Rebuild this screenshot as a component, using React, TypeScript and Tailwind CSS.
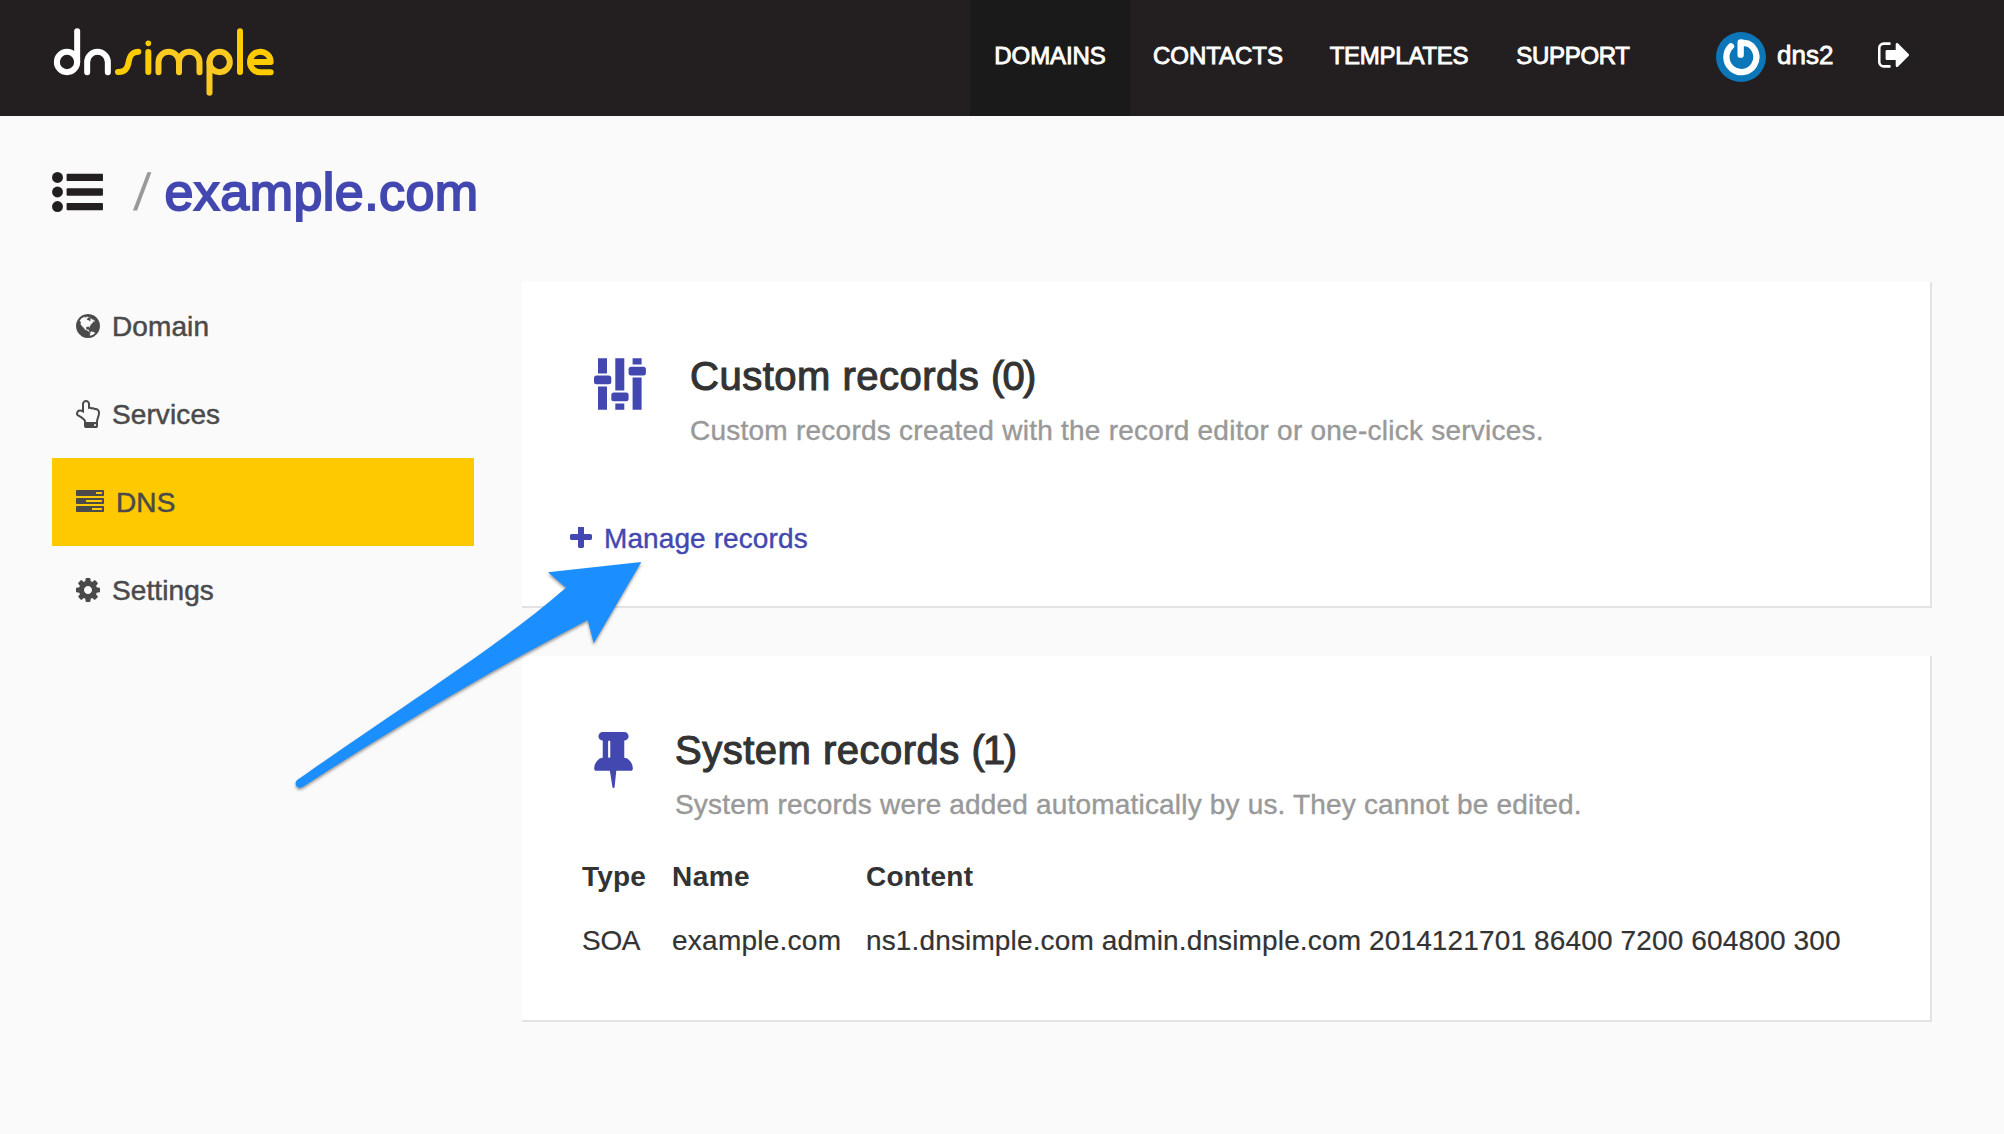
import React from "react";

const GLOBE =
  "M896 128q209 0 385.5 103t279.5 279.5 103 385.5-103 385.5-279.5 279.5-385.5 103-385.5-103-279.5-279.5-103-385.5 103-385.5 279.5-279.5 385.5-103zm274 521q-2 1-9.5 9.5t-13.5 9.5q2 0 4.5-5t5-11 3.5-7q6-7 22-15 14-6 52-12 34-8 51 11-2-2 9.5-13t14.5-12q3-2 15-4.5t15-7.5l2-22q-12 1-17.5-7t-6.5-21q0 2-6 8 0-7-4.5-8t-11.5 1-9 1q-10-3-15-7.5t-8-16.5-4-15q-2-5-9.5-11t-9.5-10q-1-2-2.5-5.5t-3-6.5-4-5.5-5.5-2.5-7 5-7.5 10-4.5 5q-3-2-6-1.5t-4.5 1-4.5 3-5 3.5q-3 2-8.5 3t-8.5 2q15-5-1-11-10-4-16-3 9-4 7.5-12t-8.5-14h5q-1-4-8.5-8.5t-17.5-8.5-13-6q-8-5-34-9.5t-33-.5q-5 6-4.5 10.5t4 14 3.5 12.5q1 6-5.5 13t-6.5 12q0 7 14 15.5t10 21.5q-3 8-16 16t-16 12q-5 8-1.5 18.5t10.5 16.5q2 2 1.5 4t-3.5 4.5-5.5 4-6.5 3.5l-3 2q-11 5-20.5-6t-13.5-26q-7-25-16-30-23-8-29 1-5-13-41-26-25-9-58-4 6-1 0-15-7-15-19-12 3-6 4-17.5t1-13.5q3-13 12-23 1-1 7-8.5t9.5-13.5.5-6q35 4 50-11 5-5 11.5-17t10.5-17q9-6 14-5.5t14.5 5.5 14.5 5q14 1 15.5-11t-7.5-20q12 1 3-17-4-7-8-9-12-4-27 5-8 4 2 8-1-1-9.5 10.5t-16.5 17.5-16-5q-1-1-5.5-13.5t-9.5-13.5q-8 0-16 15 3-8-11-15t-24-8q19-12-8-27-7-4-20.5-5t-19.5 4q-5 7-5.5 11.5t5 8 10.5 5.5 11.5 4 8.5 3q14 10 8 14-2 1-8.5 3.5t-11.5 4.5-6 4q-3 4 0 14t-2 14q-5-5-9-17.5t-7-16.5q7 9-25 6l-10-1q-4 0-16 2t-20.5 1-13.5-8q-4-8 0-20 1-4 4-2-4-3-11-9.5t-10-8.5q-46 15-94 41 6 1 12-1 5-2 13-6.5t10-5.5q34-14 42-7l5-5q14 16 20 25-7-4-30-1-20 6-22 12 7 12 5 18-4-3-11.5-10t-14.5-11-15-5q-16 0-22 1-146 80-235 222 7 7 12 8 4 1 5 9t2.5 11 11.5-3q9 8 3 19 1-1 44 27 19 17 21 21 3 11-10 18-1-2-9-9t-9-4q-3 5 .5 18.5t10.5 12.5q-7 0-9.5 16t-2.5 35.5-1 23.5l2 1q-3 12 5.5 34.5t21.5 19.5q-13 3 20 43 6 8 8 9 3 2 12 7.5t15 10 10 10.5q4 5 10 22.5t14 23.5q-2 6 9.5 20t10.5 23q-1 0-2.5 1t-2.5 1q3 7 15.5 14t15.5 13q1 3 2 10t3 11 8 2q2-20-24-62-15-25-17-29-3-5-5.5-15.5t-4.5-14.5q2 0 6 1.5t8.5 3.5 7.5 4 2 3q-3 7 2 17.5t12 18.5 17 19 12 13q6 6 14 19.5t0 13.5q9 0 20 10.5t17 19.5q5 8 8 26t5 24q2 7 8.5 13.5t12.5 9.5l16 8 13 7q5 2 18.5 10.5t21.5 11.5q10 4 16 4t14.5-2.5 13.5-3.5q15-2 29 15t21 21q36 19 55 11-2 1 .5 7.5t8 15.5 9 14.5 5.5 8.5q5 6 18 15t18 15q6-4 7-9-3 8 7 20t18 10q14-3 14-32-31 15-49-18 0-1-2.5-5.5t-4-8.5-2.5-8.5 0-7.5 5-3q9 0 10-3.5t-2-12.5-4-13q-1-8-11-20t-12-15q-5 9-16 8t-16-9q0 1-1.5 5.5t-1.5 6.5q-13 0-15-1 1-3 2.5-17.5t3.5-22.5q1-4 5.5-12t7.5-14.5 4-12.5-4.5-9.5-17.5-2.5q-19 1-26 20-1 3-3 10.5t-5 11.5-9 7q-7 3-24 2t-24-5q-13-8-22.5-29t-9.5-37q0-10 2.5-26.5t3-25-5.5-24.5q3-2 9-9.5t10-10.5q2-1 4.5-1.5t4.5 0 4-1.5 3-6q-1-1-4-3-3-3-4-3 7 3 28.5-1.5t27.5 1.5q15 11 22-2 0-1-2.5-9.5t-.5-13.5q5 27 29 9 3 3 15.5 5t17.5 5q3 2 7 5.5t5.5 4.5 5-.5 8.5-6.5q10 14 12 24 11 40 19 44 7 3 11 2t4.5-9.5 0-14-1.5-12.5l-1-8v-18l-1-8q-15-3-18.5-12t1.5-18.5 15-18.5q1-1 8-3.5t15.5-6.5 12.5-8q21-19 15-35 7 0 11-9-1 0-5-3t-7.5-5-4.5-2q9-5 2-16 5-3 7.5-11t7.5-10q9 12 21 2 8-8 1-16 5-7 20.5-10.5t18.5-9.5q7 2 8-2t1-12 3-12q4-5 15-9t13-5l17-11q3-4 0-4 18 2 31-11 10-11-6-20 3-6-3-9.5t-15-5.5q3-1 11.5-.5t10.5-1.5q15-10-7-16-17-5-43 12zm-163 877q206-36 351-189-3-3-12.5-4.5t-12.5-3.5q-18-7-24-8 1-7-2.5-13t-8-9-12.5-8-11-7q-2-2-7-6t-7-5.5-7.5-4.5-8.5-2-10 1l-3 1q-3 1-5.5 2.5t-5.5 3-4 3 0 2.5q-21-17-36-22-5-1-11-5.5t-10.5-7-10-1.5-11.5 7q-5 5-6 15t-2 13q-7-5 0-17.5t2-18.5q-3-6-10.5-4.5t-12 4.5-11.5 8.5-9 6.5-8.5 5.5-8.5 7.5q-3 4-6 12t-5 11q-2-4-11.5-6.5t-9.5-5.5q2 10 4 35t5 38q7 31-12 48-27 25-29 40-4 22 12 26 0 7-8 20.5t-7 21.5q0 6 2 16z";
const HAND =
  "M1408 1600q0-26-19-45t-45-19-45 19-19 45 19 45 45 19 45-19 19-45zm128-764q0-189-167-189-26 0-56 5-16-30-52.5-47.5t-73.5-17.5-69 18q-50-53-119-53-25 0-55.5 10t-47.5 25v-331q0-52-38-90t-90-38q-51 0-89.5 39t-38.5 89v576q-20 0-48.5-15t-55-33-68-33-84.5-15q-67 0-97.5 44.5t-30.5 115.5q0 24 139 90 44 24 65 37 64 40 145 112 81 71 106 101 57 69 57 140v32h640v-32q0-72 32-167t64-193.5 32-179.5zm128-5q0 133-69 322-59 164-59 223v288q0 53-37.5 90.5t-90.5 37.5h-640q-53 0-90.5-37.5t-37.5-90.5v-288q0-10-4.5-21.5t-14-23.5-18-22.5-22.5-24-21.5-20.5-21.5-19-17-14q-74-65-129-100-21-13-62-33t-72-37-63-40.5-49.5-55-17.5-69.5q0-125 67-206.5t189-81.5q68 0 128 22v-374q0-104 77-180t179-76q105 0 181 75.5t76 180.5v169q62 4 119 37 21-3 43-3 101 0 178 60 139-1 219.5 85t80.5 227z";
const TASKS =
  "M1024 1408h640v-128h-640v128zm-384-512h1024v-128h-1024v128zm640-512h384v-128h-384v128zm512 832v256q0 26-19 45t-45 19h-1664q-26 0-45-19t-19-45v-256q0-26 19-45t45-19h1664q26 0 45 19t19 45zm0-512v256q0 26-19 45t-45 19h-1664q-26 0-45-19t-19-45v-256q0-26 19-45t45-19h1664q26 0 45 19t19 45zm0-512v256q0 26-19 45t-45 19h-1664q-26 0-45-19t-19-45v-256q0-26 19-45t45-19h1664q26 0 45 19t19 45z";
const COG =
  "M1152 896q0-106-75-181t-181-75-181 75-75 181 75 181 181 75 181-75 75-181zm512-109v222q0 12-8 23t-20 13l-185 28q-19 54-39 91 35 50 107 138 10 12 10 25t-9 23q-27 37-99 108t-94 71q-12 0-26-9l-138-108q-44 23-91 38-16 136-29 186-7 28-36 28h-222q-14 0-24.5-8.5t-11.5-21.5l-28-184q-49-16-90-37l-141 107q-10 9-25 9-14 0-25-11-126-114-165-168-7-10-7-23 0-12 8-23 15-21 51-66.5t54-70.5q-27-50-41-99l-183-27q-13-2-21-12.5t-8-23.5v-222q0-12 8-23t19-13l186-28q14-46 39-92-40-57-107-138-10-12-10-24 0-10 9-23 26-36 98.5-107.5t94.5-71.5q13 0 26 10l138 107q44-23 91-38 16-136 29-186 7-28 36-28h222q14 0 24.5 8.5t11.5 21.5l28 184q49 16 90 37l142-107q9-9 24-9 13 0 25 10 129 119 165 170 7 8 7 22 0 12-8 23-15 21-51 66.5t-54 70.5q26 50 41 98l183 28q13 2 21 12.5t8 23.5z";
const SIGN_OUT =
  "M704 1440q0 4 1 20t.5 26.5-3 23.5-10 19.5-20.5 6.5h-320q-119 0-203.5-84.5t-84.5-203.5v-704q0-119 84.5-203.5t203.5-84.5h320q13 0 22.5 9.5t9.5 22.5q0 4 1 20t.5 26.5-3 23.5-10 19.5-20.5 6.5h-320q-66 0-113 47t-47 113v704q0 66 47 113t113 47h312l11.5 1 11.5 3 8 5.5 7 9 2 13.5zm928-544q0 26-19 45l-544 544q-19 19-45 19t-45-19-19-45v-288h-448q-26 0-45-19t-19-45v-384q0-26 19-45t45-19h448v-288q0-26 19-45t45-19 45 19l544 544q19 19 19 45z";
const PIN =
  "M800 864v-448q0-14-9-23t-23-9-23 9-9 23v448q0 14 9 23t23 9 23-9 9-23zm672 352q0 26-19 45t-45 19h-429l-51 483q-2 12-10.5 20.5t-20.5 8.5h-1q-27 0-32-27l-76-485h-404q-26 0-45-19t-19-45q0-123 78.5-221.5t177.5-98.5v-512q-52 0-90-38t-38-90 38-90 90-38h640q52 0 90 38t38 90-38 90-90 38v512q99 0 177.5 98.5t78.5 221.5z";
const PLUS =
  "M1600 736v192q0 40-28 68t-68 28h-416v416q0 40-28 68t-68 28h-192q-40 0-68-28t-28-68v-416h-416q-40 0-68-28t-28-68v-192q0-40 28-68t68-28h416v-416q0-40 28-68t68-28h192q40 0 68 28t28 68v416h416q40 0 68 28t28 68z";

function Glyph({ d, box, className }: { d: string; box: string; className: string }) {
  return (
    <svg viewBox={box} className={`shrink-0 fill-current ${className}`} aria-hidden="true">
      <path d={d} />
    </svg>
  );
}

function Logo() {
  return (
    <svg viewBox="0 0 780 330" className="h-[110px] w-[260px]" fill="none" strokeWidth="18" strokeLinecap="round" strokeLinejoin="round" role="img" aria-label="dnsimple">
      <g stroke="#ffffff">
        <circle cx="81" cy="156" r="30.5" />
        <path d="M111.500 64V156" />
        <path d="M141.500 187V156.500A31 31 0 0 1 203.500 156.500V187" />
      </g>
      <g stroke="#fecb00">
        <path d="M234 186C256 187 263 174 266 156C269 138 275 126 295 125" />
        <path d="M325 126V186" />
        <path d="M600 64V186" />
        <path d="M644 156H692A31 31 0 1 0 661 187H692" />
      </g>
      <circle cx="325" cy="100" r="8.500" fill="#fecb00" />
      <g stroke="#fbca22">
        <path d="M355.500 187V156A30.750 30.750 0 0 1 417 156V187M417 156A30.750 30.750 0 0 1 478.500 156V187" />
        <circle cx="539" cy="156" r="30.500" />
        <path d="M508.500 156V248" />
      </g>
    </svg>
  );
}

function Avatar() {
  return (
    <svg viewBox="78 66 150 150" className="h-[50px] w-[50px] rounded-full bg-[#0b76b8]" fill="none" aria-hidden="true">
      <path d="M152 134V97L174 101A45 45 0 1 1 123 109" stroke="#ffffff" strokeWidth="19" strokeLinecap="round" strokeLinejoin="round" className="blur-[0.700px]" />
    </svg>
  );
}

function Sliders() {
  return (
    <svg viewBox="0 0 52 52" className="h-[52px] w-[52px] fill-current" aria-hidden="true">
      <path d="M4 .2h9v15.300H4zM4 28.500h9v23.300H4zM21.300.2h9v32.300h-9zM21.300 45.500h9v6.300h-9zM38.600.2h9v6.300h-9zM38.600 19.500h9v32.300h-9z" />
      <rect x="0" y="17.500" width="17.300" height="8.800" rx="2.500" />
      <rect x="17.300" y="34.500" width="17.300" height="8.800" rx="2.500" />
      <rect x="34.600" y="8.800" width="17.300" height="8.800" rx="2.500" />
    </svg>
  );
}

function ListIcon() {
  return (
    <svg viewBox="0 192 1792 1408" className="h-10 w-[51px] fill-[#231f20]" aria-hidden="true">
      {[384, 896, 1408].map((y) => (
        <g key={y}>
          <circle cx="192" cy={y} r="192" />
          <rect x="512" y={y - 128} width="1280" height="256" rx="32" />
        </g>
      ))}
    </svg>
  );
}

function Arrow() {
  return (
    <svg viewBox="280 540 400 270" className="pointer-events-none absolute left-[280px] top-[540px] h-[270px] w-[400px] drop-shadow-[0_2px_1.500px_rgba(0,0,0,0.400)]" aria-hidden="true">
      <path
        fill="#1b8fff"
        d="M641.300 562L548 572.300L566 587.700C500 645 420 694 297.500 779.800A4.300 4.300 0 0 0 302.500 787C400 724 490 671 587.700 620L593.700 643.300Z"
      />
    </svg>
  );
}

const nav = [
  { label: "DOMAINS", cls: "w-40 bg-[#1a1a1a] tracking-[-0.100px]" },
  { label: "CONTACTS", cls: "w-[176px] tracking-[-0.050px]" },
  { label: "TEMPLATES", cls: "w-[186px] tracking-[-0.250px]" },
  { label: "SUPPORT", cls: "w-[162px] tracking-[-0.300px]" },
];

const side = [
  { label: "Domain", d: GLOBE, box: "128 0 1536 1792", icon: "w-6 h-7", cls: "" },
  { label: "Services", d: HAND, box: "128 0 1536 1792", icon: "w-6 h-7", cls: "" },
  { label: "DNS", d: TASKS, box: "0 0 1792 1792", icon: "w-7 h-7", cls: "bg-[#ffc900]" },
  { label: "Settings", d: COG, box: "128 0 1536 1792", icon: "w-6 h-7", cls: "" },
];

function CardTitle({ text, count }: { text: string; count: number }) {
  return (
    <h2 className="text-[40px] leading-[52px] tracking-[0.500px] [-webkit-text-stroke:1.100px_#333333]">
      {text} <span className="tracking-[-1.700px]">({count})</span>
    </h2>
  );
}

export default function App() {
  return (
    <div className="relative h-[1134px] w-[2004px] overflow-hidden bg-[#fafafa] font-['Liberation_Sans',Arial,sans-serif] text-[28px] text-[#333333]">
      <header className="flex h-[116px] bg-[#231f20] text-white">
        <div className="ml-10 mt-2.5 w-[930px]">
          <Logo />
        </div>
        <nav className="flex text-2xl [-webkit-text-stroke:0.900px_white]">
          {nav.map((n) => (
            <a key={n.label} className={`flex h-[116px] justify-center pt-10 leading-8 ${n.cls}`}>
              {n.label}
            </a>
          ))}
        </nav>
        <div className="ml-[62px] mt-8 flex h-[50px]">
          <Avatar />
          <span className="ml-[11px] w-[101px] text-[26px] leading-[46px] [-webkit-text-stroke:0.800px_white]">dns2</span>
          <Glyph d={SIGN_OUT} box="64 192 1568 1408" className="mt-[9px] h-7 w-[31px]" />
        </div>
      </header>

      <div className="ml-[52px] mt-14 flex h-10 items-center">
        <ListIcon />
        <span className="ml-[32px] -skew-x-6 text-[52px] leading-10 text-[#999999]">/</span>
        <h1 className="ml-[15px] text-[52px] leading-10 tracking-[0.450px] text-[#4348b0] [-webkit-text-stroke:1.900px_#4348b0]">example.com</h1>
      </div>

      <div className="mt-[70px] flex pl-[52px]">
        <aside className="w-[422px] tracking-[0.100px] text-[#4a4a4a] [-webkit-text-stroke:0.500px_#4a4a4a]">
          {side.map((s) => (
            <a key={s.label} className={`flex h-[88px] items-center gap-3 pl-6 ${s.cls}`}>
              <Glyph d={s.d} box={s.box} className={s.icon} />
              <span className="pt-px">{s.label}</span>
            </a>
          ))}
        </aside>

        <main className="ml-12 flex w-[1410px] flex-col gap-12">
          <section className="h-[326px] border-b-2 border-r-2 border-[#e3e3e3] bg-white">
            <div className="flex h-[236px] pl-[72px]">
              <div className="w-24 pt-[76px] text-[#4348b0]">
                <Sliders />
              </div>
              <div className="pt-[68px]">
                <CardTitle text="Custom records" count={0} />
                <p className="pt-px leading-[56px] tracking-[0.245px] text-[#999999] [-webkit-text-stroke:0.400px_#999999]">
                  Custom records created with the record editor or one-click services.
                </p>
              </div>
            </div>
            <a className="flex h-10 items-center pl-12 tracking-[0.100px] text-[#4348b0] [-webkit-text-stroke:0.400px_#4348b0]">
              <Glyph d={PLUS} box="192 192 1408 1408" className="mr-3 h-[22px] w-[22px]" />
              <span className="pt-px">Manage records</span>
            </a>
          </section>

          <section className="h-[366px] border-b-2 border-r-2 border-[#e3e3e3] bg-white">
            <div className="flex h-[189px] pl-[72px]">
              <div className="w-[81px] pt-[76px] text-[#4348b0]">
                <Glyph d={PIN} box="320 128 1152 1664" className="h-14 w-[39px]" />
              </div>
              <div className="pt-[68px]">
                <CardTitle text="System records" count={1} />
                <p className="pt-px leading-[56px] tracking-[0.180px] text-[#999999] [-webkit-text-stroke:0.400px_#999999]">
                  System records were added automatically by us. They cannot be edited.
                </p>
              </div>
            </div>
            <div className="grid grid-cols-[90px_194px_1fr] pl-[60px] leading-[64px]">
              <span className="font-bold tracking-[0.150px]">Type</span>
              <span className="font-bold tracking-[0.450px]">Name</span>
              <span className="font-bold tracking-[0.200px]">Content</span>
              <span className="tracking-[-0.300px] [-webkit-text-stroke:0.200px_#333333]">SOA</span>
              <span className="tracking-[0.250px] [-webkit-text-stroke:0.200px_#333333]">example.com</span>
              <span className="whitespace-nowrap tracking-[0.140px] [-webkit-text-stroke:0.200px_#333333]">
                ns1.dnsimple.com admin.dnsimple.com 2014121701 86400 7200 604800 300
              </span>
            </div>
          </section>
        </main>
      </div>
      <Arrow />
    </div>
  );
}
